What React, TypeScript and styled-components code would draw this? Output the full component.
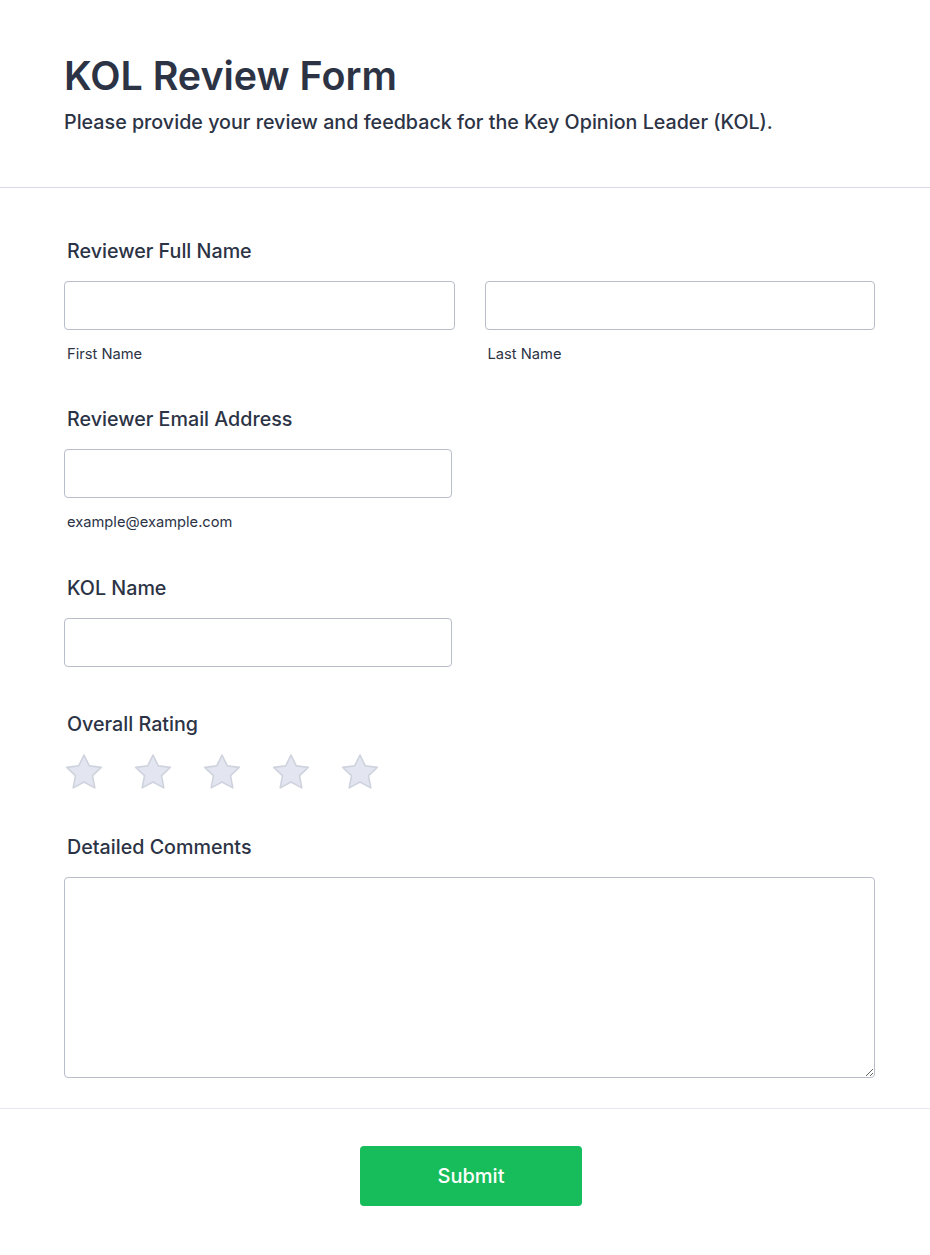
import type { FC, ReactElement } from "react";
import styled, { createGlobalStyle } from "styled-components";

const GlobalStyle = createGlobalStyle`
  html, body {
    margin: 0;
    padding: 0;
    background: #ffffff;
  }
  body {
    font-family: Inter, "Noto Sans", "Liberation Sans", sans-serif;
    color: #2c3345;
  }
  * { box-sizing: border-box; }
`;

const Page = styled.div`
  width: 930px;
  background: #ffffff;
`;

const Header = styled.header`
  padding: 52px 55px 52px 64px;
  border-bottom: 1px solid #d8dae9;
`;

const Title = styled.h1`
  margin: 0;
  font-size: 39.4px;
  line-height: 48px;
  font-weight: 600;
  color: #2c3345;
`;

const Subtitle = styled.p`
  margin: 10px 0 0;
  font-size: 19.7px;
  line-height: 25px;
  font-weight: 500;
  color: #2c3345;
`;

const Body = styled.form`
  display: flex;
  flex-direction: column;
  gap: 45.5px;
  padding: 50.5px 55px 30px 64px;
  border-bottom: 1px solid #e6e8f0;
`;

const Field = styled.div`
  display: flex;
  flex-direction: column;
`;

const Label = styled.label`
  padding-left: 3px;
  font-size: 19.7px;
  line-height: 25px;
  font-weight: 500;
  color: #2c3345;
  margin-bottom: 17px;
`;

const Row = styled.div`
  display: grid;
  grid-template-columns: 1fr 1fr;
  column-gap: 30px;
`;

const Cell = styled.div`
  display: flex;
  flex-direction: column;
`;

const Input = styled.input<{ $width?: number }>`
  width: ${({ $width }) => ($width ? `${$width}px` : "100%")};
  height: 49px;
  border: 1px solid #b8bdc9;
  border-radius: 4px;
  background: #ffffff;
  padding: 0 12px;
  font-family: inherit;
  font-size: 16px;
  outline: none;
`;

const SubLabel = styled.span`
  margin-top: 16px;
  padding-left: 3px;
  font-size: 14.7px;
  line-height: 16px;
  color: #2c3345;
`;

const Stars = styled.div`
  display: flex;
  gap: 29px;
`;

const StarButton = styled.button`
  display: block;
  padding: 0;
  margin: 0;
  border: none;
  background: transparent;
  width: 40px;
  height: 35px;
  cursor: pointer;

  svg { display: block; }
`;

const TextArea = styled.textarea`
  width: 100%;
  height: 201px;
  border: 1px solid #b8bdc9;
  border-radius: 4px;
  padding: 10px 12px;
  font-family: inherit;
  font-size: 16px;
  resize: vertical;
  outline: none;
`;

const Footer = styled.div`
  display: flex;
  justify-content: center;
  padding: 37px 52px 49px 64px;
`;

const SubmitButton = styled.button`
  width: 222px;
  height: 60px;
  border: none;
  border-radius: 4px;
  background: #18bd5b;
  color: #ffffff;
  font-family: inherit;
  font-size: 20px;
  font-weight: 500;
  cursor: pointer;
`;

const Star: FC = (): ReactElement => (
    <svg width="40" height="35" viewBox="0 1.5 40 35">
        <path
            d="M20 2.5 L25.3 13.4 L37.3 14.9 L28.5 23.2 L30.8 35.4 L20 29.5 L9.2 35.4 L11.5 23.2 L2.7 14.9 L14.7 13.4 Z"
            fill="#e3e6f0"
            stroke="#cfd3de"
            strokeWidth="1.6"
            strokeLinejoin="round"
        />
    </svg>
);

const App: FC = (): ReactElement => {
    return (
        <Page>
            <GlobalStyle />
            <Header>
                <Title>KOL Review Form</Title>
                <Subtitle>Please provide your review and feedback for the Key Opinion Leader (KOL).</Subtitle>
            </Header>
            <Body onSubmit={e => e.preventDefault()}>
                <Field>
                    <Label>Reviewer Full Name</Label>
                    <Row>
                        <Cell>
                            <Input type="text" />
                            <SubLabel>First Name</SubLabel>
                        </Cell>
                        <Cell>
                            <Input type="text" />
                            <SubLabel>Last Name</SubLabel>
                        </Cell>
                    </Row>
                </Field>
                <Field>
                    <Label>Reviewer Email Address</Label>
                    <Input type="email" $width={388} />
                    <SubLabel>example@example.com</SubLabel>
                </Field>
                <Field>
                    <Label>KOL Name</Label>
                    <Input type="text" $width={388} />
                </Field>
                <Field>
                    <Label>Overall Rating</Label>
                    <Stars>
                        {[1, 2, 3, 4, 5].map(n => (
                            <StarButton key={n} type="button" aria-label={`${n} star`}>
                                <Star />
                            </StarButton>
                        ))}
                    </Stars>
                </Field>
                <Field>
                    <Label>Detailed Comments</Label>
                    <TextArea />
                </Field>
            </Body>
            <Footer>
                <SubmitButton type="submit">Submit</SubmitButton>
            </Footer>
        </Page>
    );
};

export default App;
